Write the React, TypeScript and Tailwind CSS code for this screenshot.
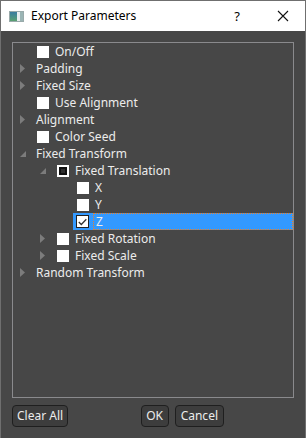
import React from 'react';

type Check = 'none' | 'off' | 'partial' | 'on';

interface Row {
  label: string;
  level: number;
  arrow: 'none' | 'closed' | 'open';
  check: Check;
  selected?: boolean;
}

const rows: Row[] = [
  { label: 'On/Off', level: 0, arrow: 'none', check: 'off' },
  { label: 'Padding', level: 0, arrow: 'closed', check: 'none' },
  { label: 'Fixed Size', level: 0, arrow: 'closed', check: 'none' },
  { label: 'Use Alignment', level: 0, arrow: 'none', check: 'off' },
  { label: 'Alignment', level: 0, arrow: 'closed', check: 'none' },
  { label: 'Color Seed', level: 0, arrow: 'none', check: 'off' },
  { label: 'Fixed Transform', level: 0, arrow: 'open', check: 'none' },
  { label: 'Fixed Translation', level: 1, arrow: 'open', check: 'partial' },
  { label: 'X', level: 2, arrow: 'none', check: 'off' },
  { label: 'Y', level: 2, arrow: 'none', check: 'off' },
  { label: 'Z', level: 2, arrow: 'none', check: 'on', selected: true },
  { label: 'Fixed Rotation', level: 1, arrow: 'closed', check: 'off' },
  { label: 'Fixed Scale', level: 1, arrow: 'closed', check: 'off' },
  { label: 'Random Transform', level: 0, arrow: 'closed', check: 'none' },
];

const Arrow: React.FC<{ kind: Row['arrow'] }> = ({ kind }) => {
  if (kind === 'closed')
    return (
      <svg width="6" height="9" viewBox="0 0 6 9">
        <path d="M0 0 L5 4.5 L0 9 Z" fill="#7c7c7c" />
      </svg>
    );
  if (kind === 'open')
    return (
      <svg width="7" height="7" viewBox="0 0 7 7" className="mt-[2px]">
        <path d="M6 0 L6 6 L0 6 Z" fill="#7c7c7c" />
      </svg>
    );
  return null;
};

const Box: React.FC<{ check: Check }> = ({ check }) => {
  if (check === 'none') return null;
  if (check === 'partial')
    return (
      <div className="w-[12px] h-[12px] bg-white flex items-center justify-center shrink-0 ml-[1px]">
        <div className="w-[8px] h-[8px] border-2 border-[#111] bg-[#2e2e2e]" />
      </div>
    );
  if (check === 'on')
    return (
      <div className="w-[13px] h-[13px] bg-white border border-[#222] flex items-center justify-center shrink-0">
        <svg width="9" height="8" viewBox="0 0 9 8">
          <path d="M0.8 4 L3.3 6.5 L8.3 1.2" fill="none" stroke="#333" strokeWidth="1.3" />
        </svg>
      </div>
    );
  return <div className="w-[12px] h-[12px] bg-white shrink-0 ml-[1px]" />;
};

export default function App() {
  return (
    <div
      className="w-[306px] h-[438px] border border-[#6f6f6f] flex flex-col text-[12px] leading-none"
      style={{ fontFamily: '"Noto Sans", "Open Sans", sans-serif' }}
    >
      {/* Title bar */}
      <div className="h-[30px] bg-white flex items-center shrink-0">
        <div className="ml-[8px] w-[15px] h-[11px] border border-[#9aa] bg-[#dfe6e8] flex">
          <div className="w-[7px] h-full bg-gradient-to-b from-[#3a7ca0] to-[#5aa070]" />
          <div className="w-[3px] h-full bg-[#e8eef0]" />
          <div className="flex-1 bg-[#9ab4b4]" />
        </div>
        <span className="ml-[7px] text-[#000] text-[12px]">Export Parameters</span>
        <span className="ml-auto mr-[37px] text-[#000] text-[13px]">?</span>
        <svg width="12" height="12" viewBox="0 0 12 12" className="mr-[16px]">
          <path d="M1 1 L11 11 M11 1 L1 11" stroke="#111" strokeWidth="1.1" />
        </svg>
      </div>

      {/* Body */}
      <div className="flex-1 bg-[#474747] px-[11px] pt-[11px] pb-[11px] flex flex-col">
        <div className="h-[356px] border border-[#8a8a8d] flex flex-col">
          {rows.map((r) => (
            <div key={r.label} className="h-[17px] flex items-center">
              <div style={{ width: r.level * 20 }} className="shrink-0" />
              <div className="w-[20px] shrink-0 flex items-center justify-center">
                <Arrow kind={r.arrow} />
              </div>
              <div
                className={
                  'flex-1 h-full flex items-center pl-[3px] ' +
                  (r.selected ? 'bg-[#3399ff]' : '')
                }
              >
                <Box check={r.check} />
                <span
                  className={
                    'text-[#ececec] h-full flex items-center ' +
                    (r.check === 'none'
                      ? ''
                      : r.check === 'on'
                      ? 'ml-[4px] pl-[2px] flex-1 border border-dotted border-[#f08020]'
                      : 'ml-[6px]')
                  }
                >
                  {r.label}
                </span>
              </div>
            </div>
          ))}
        </div>

        {/* Buttons */}
        <div className="flex items-center mt-[7px] h-[22px]">
          <button className="h-[22px] px-[4px] rounded-[4px] border border-[#1f1f1f] bg-[#3d3d3d] text-[#ececec] text-[12px]">
            Clear All
          </button>
          <button className="ml-auto h-[22px] w-[28px] rounded-[4px] border border-[#1f1f1f] bg-[#3d3d3d] text-[#ececec] text-[12px]">
            OK
          </button>
          <button className="ml-[6px] mr-[70px] h-[22px] px-[5px] rounded-[4px] border border-[#1f1f1f] bg-[#3d3d3d] text-[#ececec] text-[12px]">
            Cancel
          </button>
        </div>
      </div>
    </div>
  );
}
